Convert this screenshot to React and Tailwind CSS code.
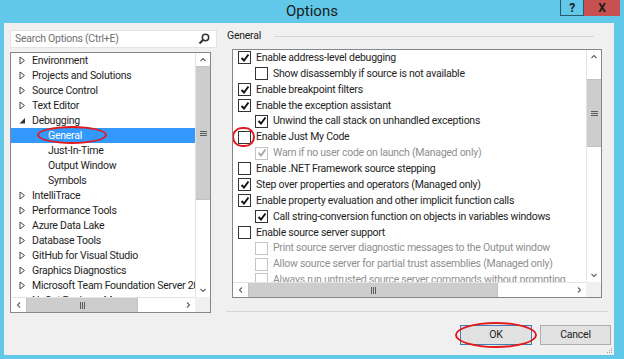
import React from 'react';

const treeItems = [
  { label: 'Environment' },
  { label: 'Projects and Solutions' },
  { label: 'Source Control' },
  { label: 'Text Editor' },
  { label: 'Debugging', open: true },
  { label: 'General', child: true, selected: true },
  { label: 'Just-In-Time', child: true },
  { label: 'Output Window', child: true },
  { label: 'Symbols', child: true },
  { label: 'IntelliTrace' },
  { label: 'Performance Tools' },
  { label: 'Azure Data Lake' },
  { label: 'Database Tools' },
  { label: 'GitHub for Visual Studio' },
  { label: 'Graphics Diagnostics' },
  { label: 'Microsoft Team Foundation Server 2015 Power Tools' },
  { label: 'NuGet Package Manager' },
];

const options = [
  { label: 'Enable address-level debugging', checked: true },
  { label: 'Show disassembly if source is not available', indent: true },
  { label: 'Enable breakpoint filters', checked: true },
  { label: 'Enable the exception assistant', checked: true },
  { label: 'Unwind the call stack on unhandled exceptions', checked: true, indent: true },
  { label: 'Enable Just My Code', circled: true },
  { label: 'Warn if no user code on launch (Managed only)', checked: true, indent: true, disabled: true },
  { label: 'Enable .NET Framework source stepping' },
  { label: 'Step over properties and operators (Managed only)', checked: true },
  { label: 'Enable property evaluation and other implicit function calls', checked: true },
  { label: 'Call string-conversion function on objects in variables windows', checked: true, indent: true },
  { label: 'Enable source server support' },
  { label: 'Print source server diagnostic messages to the Output window', indent: true, disabled: true },
  { label: 'Allow source server for partial trust assemblies (Managed only)', indent: true, disabled: true },
  { label: 'Always run untrusted source server commands without prompting', indent: true, disabled: true },
];

// small chevron used on scrollbar buttons
const Chevron = ({ dir }) => {
  const paths = {
    up: 'M1.5 5 L4 2.5 L6.5 5',
    down: 'M1.5 3 L4 5.5 L6.5 3',
    left: 'M5 1.5 L2.5 4 L5 6.5',
    right: 'M3 1.5 L5.5 4 L3 6.5',
  };
  return (
    <svg width="8" height="8" viewBox="0 0 8 8">
      <path d={paths[dir]} fill="none" stroke="#606060" strokeWidth="1.1" />
    </svg>
  );
};

const ArrowButton = ({ dir, className }) => (
  <div className={`flex items-center justify-center bg-white ${className}`}>
    <Chevron dir={dir} />
  </div>
);

const VScroll = ({ gap, thumb, tree }) => (
  <div className="flex flex-col bg-white border-l border-[#e3e3e3]">
    <ArrowButton dir="up" className={tree ? 'h-[13px]' : 'h-[14px]'} />
    <div style={{ height: gap }} />
    <div
      className="bg-[#cdcdcd] border-y border-[#c2c2c2] flex items-center justify-center"
      style={{ height: thumb }}
    >
      <svg width="7" height="7" viewBox="0 0 7 7">
        <path d="M0 1.5 H7 M0 3.5 H7 M0 5.5 H7" stroke="#5a5a5a" strokeWidth="1" />
      </svg>
    </div>
    <div className="flex-1" />
    <ArrowButton dir="down" className="h-[14px]" />
  </div>
);

const HScroll = ({ thumb }) => (
  <div className="flex bg-white border-t border-[#e3e3e3]">
    <ArrowButton dir="left" className="w-[15px]" />
    <div
      className="bg-[#cdcdcd] border-x border-[#c2c2c2] flex items-center justify-center"
      style={{ width: thumb }}
    >
      <svg width="7" height="7" viewBox="0 0 7 7">
        <path d="M1.5 0 V7 M3.5 0 V7 M5.5 0 V7" stroke="#5a5a5a" strokeWidth="1" />
      </svg>
    </div>
    <div className="flex-1" />
    <ArrowButton dir="right" className="w-[15px]" />
  </div>
);

const Checkbox = ({ checked, disabled, circled }) => (
  <div className="relative shrink-0">
    <div
      className={`w-[13px] h-[13px] bg-white border flex items-center justify-center ${
        disabled ? 'border-[#c4c4c4]' : 'border-[#333333]'
      }`}
    >
      {checked && (
        <svg width="10" height="10" viewBox="0 0 10 10">
          <path
            d="M1.5 5 L4 7.5 L8.5 1.5"
            fill="none"
            stroke={disabled ? '#a8a8a8' : '#111111'}
            strokeWidth="1.9"
          />
        </svg>
      )}
    </div>
    {circled && (
      <div className="absolute -left-[6px] -top-[4px] w-[23px] h-[20px] rounded-full border-2 border-[#e3191c]" />
    )}
  </div>
);

const TreeRow = ({ item }) => (
  <div
    className={`relative h-[15px] flex items-center whitespace-nowrap ${
      item.selected ? 'bg-[#3399ff] text-white' : ''
    } ${item.child ? 'pl-[37px]' : 'pl-[8px]'}`}
  >
    {!item.child && (
      <svg width="7" height="9" viewBox="0 0 7 9" className="mr-[6px] shrink-0">
        {item.open ? (
          <path d="M6 2 V7.5 H0.5 Z" fill="#333333" />
        ) : (
          <path d="M1 1 L5.5 4.5 L1 8 Z" fill="none" stroke="#444444" strokeWidth="1" />
        )}
      </svg>
    )}
    <span>{item.label}</span>
    {item.selected && (
      <div className="absolute left-[26px] -top-[2px] w-[70px] h-[18px] rounded-[50%] border-2 border-[#e3191c]" />
    )}
  </div>
);

const OptionRow = ({ opt }) => (
  <div
    className={`h-[15.86px] flex items-center gap-[5px] whitespace-nowrap ${
      opt.indent ? 'pl-[22px]' : 'pl-[5px]'
    } ${opt.disabled ? 'text-[#8f8f8f]' : ''}`}
  >
    <Checkbox checked={opt.checked} disabled={opt.disabled} circled={opt.circled} />
    <span>{opt.label}</span>
  </div>
);

const App = () => {
  return (
    <div className="w-[624px] h-[359px] bg-[#61c8ea] flex flex-col overflow-hidden font-['Segoe_UI',Roboto,sans-serif] text-[10.5px] tracking-[-0.25px] text-[#1e1e1e]">
      {/* title bar */}
      <div className="h-[23px] grid grid-cols-[1fr_auto_1fr]">
        <div />
        <div className="text-[15px] tracking-normal leading-[23px] text-[#1b1b1b]">Options</div>
        <div className="flex justify-end items-start pr-[4px]">
          <div className="w-[24px] h-[16px] border border-t-0 border-[#2a5a6e] flex items-center justify-center text-[12px] font-bold leading-none text-[#1b1b1b]">
            ?
          </div>
          <div className="w-[36px] h-[16px] bg-[#c75050] flex items-center justify-center text-[12px] font-bold leading-none text-[#1b1b1b]">
            X
          </div>
        </div>
      </div>

      {/* client area */}
      <div className="relative flex-1 ml-[4px] mr-[10px] mb-[4px] bg-[#f0f0f0] flex">
        {/* left: search + tree */}
        <div className="w-[213px] pl-[6px] pt-[7px] flex flex-col">
          <div className="w-[207px] h-[18px] bg-white border border-[#e3e3e3] flex items-center justify-between pl-[4px] pr-[6px] text-[#707070]">
            <span>Search Options (Ctrl+E)</span>
            <svg width="12" height="12" viewBox="0 0 12 12">
              <circle cx="7.5" cy="4.5" r="3.2" fill="none" stroke="#333333" strokeWidth="1.5" />
              <path d="M5.2 6.8 L1.5 10.5" stroke="#333333" strokeWidth="2" />
            </svg>
          </div>
          <div className="mt-[4px] w-[201px] h-[261px] bg-white border border-[#828790] grid grid-cols-[1fr_15px] grid-rows-[1fr_15px]">
            <div className="overflow-hidden">
              {treeItems.map((item) => (
                <TreeRow key={item.label} item={item} />
              ))}
            </div>
            <VScroll gap={0} thumb={134} tree />
            <HScroll thumb={112} />
            <div className="bg-[#f0f0f0]" />
          </div>
        </div>

        {/* right: page */}
        <div className="flex-1 flex flex-col">
          <div className="h-[14px] mt-[6px] ml-[10px] mr-[20px] flex items-center">
            <span>General</span>
            <div className="flex-1 h-px bg-[#d5d5d5] ml-[13px]" />
          </div>
          <div className="mt-[6px] ml-[15px] w-[370px] h-[249px] bg-white border border-[#828790] grid grid-cols-[1fr_15px] grid-rows-[1fr_15px]">
            <div className="overflow-hidden">
              {options.map((opt) => (
                <OptionRow key={opt.label} opt={opt} />
              ))}
            </div>
            <VScroll gap={15} thumb={68} />
            <HScroll thumb={250} />
            <div className="bg-[#f0f0f0]" />
          </div>
          <div className="mt-[13px] ml-[9px] mr-[6px] h-px bg-[#d5d5d5]" />
          <div className="mt-[13px] mr-[3px] flex justify-end gap-[8px]">
            <div className="relative">
              <button className="w-[72px] h-[20px] bg-[#e1e1e1] border border-[#3c7fb1] text-[#1e1e1e]">
                OK
              </button>
              <div className="absolute -left-[5px] -top-[3px] w-[82px] h-[26px] rounded-[50%] border-2 border-[#e3191c]" />
            </div>
            <button className="w-[71px] h-[20px] bg-[#e1e1e1] border border-[#adadad] text-[#1e1e1e]">
              Cancel
            </button>
          </div>
        </div>

        {/* resize grip */}
        <svg width="6" height="6" viewBox="0 0 6 6" className="absolute right-[1px] bottom-[1px]">
          <rect x="4" y="0" width="1" height="1" fill="#a0a0a0" />
          <rect x="2" y="2" width="1" height="1" fill="#a0a0a0" />
          <rect x="4" y="2" width="1" height="1" fill="#a0a0a0" />
          <rect x="0" y="4" width="1" height="1" fill="#a0a0a0" />
          <rect x="2" y="4" width="1" height="1" fill="#a0a0a0" />
          <rect x="4" y="4" width="1" height="1" fill="#a0a0a0" />
        </svg>
      </div>
    </div>
  );
};

export default App;
